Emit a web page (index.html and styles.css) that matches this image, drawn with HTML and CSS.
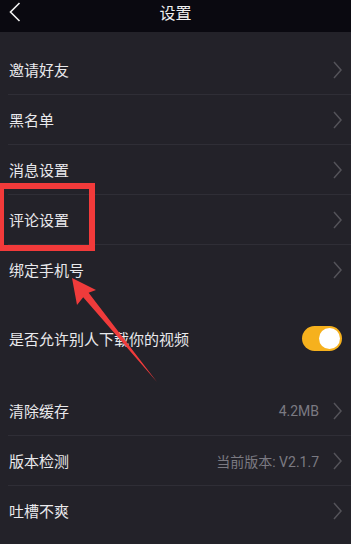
FILE: index.html
```html
<!DOCTYPE html>
<html lang="zh-CN">
<head>
    <meta charset="UTF-8">
    <meta name="viewport" content="width=device-width, initial-scale=1.0">
    <title>设置</title>
    <link rel="stylesheet" href="styles.css">
</head>
<body>
    <div class="screen">
        <div class="header">
            <svg class="back" width="12" height="20" viewBox="0 0 12 20">
                <polyline points="10.5,1 1.5,10 10.5,19" fill="none" stroke="#f2f2f2" stroke-width="1.6"/>
            </svg>
            <h1 class="title">设置</h1>
            <span></span>
        </div>

        <div class="group first">
            <div class="row"><span class="label">邀请好友</span><span class="right"><i class="chev"></i></span></div>
            <div class="row"><span class="label">黑名单</span><span class="right"><i class="chev"></i></span></div>
            <div class="row"><span class="label">消息设置</span><span class="right"><i class="chev"></i></span></div>
            <div class="row"><span class="label">评论设置</span><span class="right"><i class="chev"></i></span></div>
            <div class="row"><span class="label">绑定手机号</span><span class="right"><i class="chev"></i></span></div>
        </div>

        <div class="group toggle-group">
            <div class="row">
                <span class="label">是否允许别人下载你的视频</span>
                <span class="switch"><span class="knob"></span></span>
            </div>
        </div>

        <div class="group last">
            <div class="row"><span class="label">清除缓存</span><span class="right"><span class="value">4.2MB</span><i class="chev"></i></span></div>
            <div class="row"><span class="label">版本检测</span><span class="right"><span class="value">当前版本: V2.1.7</span><i class="chev"></i></span></div>
            <div class="row"><span class="label">吐槽不爽</span><span class="right"><i class="chev"></i></span></div>
        </div>

        <!-- annotation -->
        <div class="mark-box"></div>
        <svg class="mark-arrow" width="351" height="544" viewBox="0 0 351 544">
            <polygon points="72,278 96,290 88.6,292.8 157,382 83.2,297.2 77,305" fill="#ef3b3b"/>
        </svg>
    </div>
</body>
</html>
```

FILE: styles.css
```css
* {
    box-sizing: border-box;
    margin: 0;
    padding: 0;
}

body {
    background-color: #232229;
    font-family: 'Roboto', 'Noto Sans CJK SC', sans-serif;
    color: #e9e9ec;
}

.screen {
    position: relative;
    width: 351px;
    height: 544px;
    overflow: hidden;
    background-color: #232229;
}

.header {
    display: grid;
    grid-template-columns: 40px 1fr 40px;
    align-items: center;
    height: 32px;
    background-color: #0a0910;
}

.back {
    margin-left: 9px;
    margin-top: -8px;
}

.title {
    text-align: center;
    font-size: 16px;
    font-weight: 400;
    color: #f0f0f0;
    margin-top: -9px;
}

.group.first {
    margin-top: 13px;
}

.group.toggle-group {
    margin-top: 20px;
}

.group.last {
    margin-top: 23px;
}

.row {
    display: flex;
    align-items: center;
    justify-content: space-between;
    height: 50px;
    margin-left: 8px;
    padding-left: 1px;
    padding-right: 9px;
    border-bottom: 1px solid #2f2e36;
}

.group .row:last-child {
    border-bottom: none;
    height: 49px;
}

.label {
    font-size: 15px;
}

.right {
    display: flex;
    align-items: center;
    gap: 14px;
}

.value {
    font-size: 14px;
    color: #7b7a82;
}

.chev {
    display: block;
    width: 9px;
    height: 18px;
    background: no-repeat center / 9px 18px url("data:image/svg+xml;utf8,<svg xmlns='http://www.w3.org/2000/svg' width='9' height='18' viewBox='0 0 9 18'><polyline points='1,1 8,9 1,17' fill='none' stroke='%23545359' stroke-width='1.5'/></svg>");
}

.switch {
    position: relative;
    width: 40px;
    height: 25px;
    border-radius: 13px;
    background-color: #f6b11d;
}

.knob {
    position: absolute;
    top: 2px;
    right: 2px;
    width: 21px;
    height: 21px;
    border-radius: 50%;
    background-color: #ffffff;
}

.mark-box {
    position: absolute;
    left: -2px;
    top: 183px;
    width: 97px;
    height: 68px;
    border: 6px solid #f23a3a;
}

.mark-arrow {
    position: absolute;
    left: 0;
    top: 0;
}
```
